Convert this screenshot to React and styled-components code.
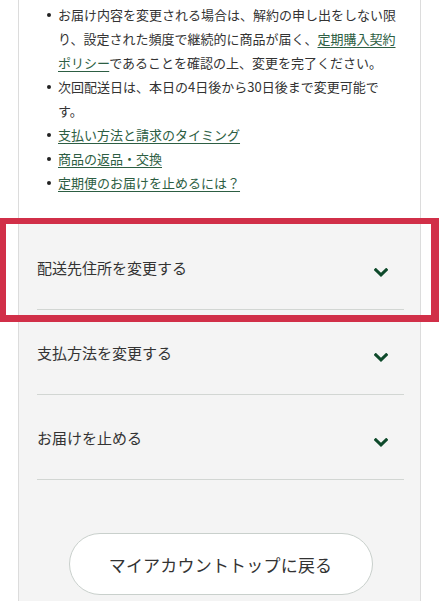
import React from "react";
import styled, { createGlobalStyle } from "styled-components";

const GlobalStyle = createGlobalStyle`
  html, body {
    margin: 0;
    padding: 0;
    background: #ffffff;
  }
  body {
    font-family: "Noto Sans CJK JP", "Noto Sans", sans-serif;
    color: #333333;
  }
  * { box-sizing: border-box; }
`;

const Page = styled.div`
  position: relative;
  width: 441px;
  height: 601px;
  overflow: hidden;
  background: #ffffff;
`;

const Card = styled.div`
  margin-left: 18px;
  width: 403px;
  border-left: 1px solid #dcdcdc;
  border-right: 1px solid #dcdcdc;
`;

const Notice = styled.ul`
  margin: 0;
  list-style: none;
  background: #ffffff;
  padding: 3px 20px 24px 39px;
`;

const NoticeItem = styled.li`
  position: relative;
  font-size: 13px;
  line-height: 24px;
  color: #333333;

  &::before {
    content: "";
    position: absolute;
    left: -11px;
    top: 10px;
    width: 4px;
    height: 4px;
    border-radius: 50%;
    background: #222222;
  }
`;

const Link = styled.a`
  color: #2d5e43;
  text-decoration: underline;
  text-underline-offset: 3px;
  text-decoration-thickness: 1px;
`;

const Menu = styled.div`
  background: #f4f4f4;
  padding: 6px 16px 6px 18px;
  display: flex;
  flex-direction: column;
`;

const Row = styled.div`
  height: 85px;
  display: flex;
  align-items: flex-start;
  justify-content: space-between;
  padding-top: 32px;
  border-bottom: 1px solid #d2d6d3;
`;

const RowLabel = styled.span`
  font-size: 15px;
  line-height: 22px;
  color: #333333;
`;

const Chevron = styled.svg`
  width: 14px;
  height: 9px;
  margin-top: 11px;
  margin-right: 16px;
  color: #0e4a2b;
`;

const BackButton = styled.button`
  align-self: center;
  margin-top: 53px;
  width: 304px;
  height: 62px;
  border-radius: 31px;
  border: 1px solid #c9d0cc;
  background: #ffffff;
  font-family: "Noto Sans CJK JP", "Noto Sans", sans-serif;
  font-size: 17px;
  color: #333333;
  letter-spacing: 0.2px;
`;

const Highlight = styled.div`
  position: absolute;
  left: 0;
  top: 218px;
  width: 439px;
  height: 104px;
  border-style: solid;
  border-color: #d12f48;
  border-width: 6px 8px 7px 6px;
  pointer-events: none;
`;

const ChevronIcon = () => (
  <Chevron viewBox="0 0 14 9" fill="none">
    <path
      d="M1.8 1.8 L7 6.8 L12.2 1.8"
      stroke="currentColor"
      strokeWidth="3"
      strokeLinecap="square"
      strokeLinejoin="miter"
    />
  </Chevron>
);

const rows = ["配送先住所を変更する", "支払方法を変更する", "お届けを止める"];

export default function App() {
  return (
    <>
      <GlobalStyle />
      <Page>
        <Card>
          <Notice>
            <NoticeItem>
              お届け内容を変更される場合は、解約の申し出をしない限り、設定された頻度で継続的に商品が届く、
              <Link href="#">定期購入契約ポリシー</Link>
              であることを確認の上、変更を完了ください。
            </NoticeItem>
            <NoticeItem>次回配送日は、本日の4日後から30日後まで変更可能です。</NoticeItem>
            <NoticeItem>
              <Link href="#">支払い方法と請求のタイミング</Link>
            </NoticeItem>
            <NoticeItem>
              <Link href="#">商品の返品・交換</Link>
            </NoticeItem>
            <NoticeItem>
              <Link href="#">定期便のお届けを止めるには？</Link>
            </NoticeItem>
          </Notice>
          <Menu>
            {rows.map((r) => (
              <Row key={r}>
                <RowLabel>{r}</RowLabel>
                <ChevronIcon />
              </Row>
            ))}
            <BackButton>マイアカウントトップに戻る</BackButton>
          </Menu>
        </Card>
        <Highlight />
      </Page>
    </>
  );
}
